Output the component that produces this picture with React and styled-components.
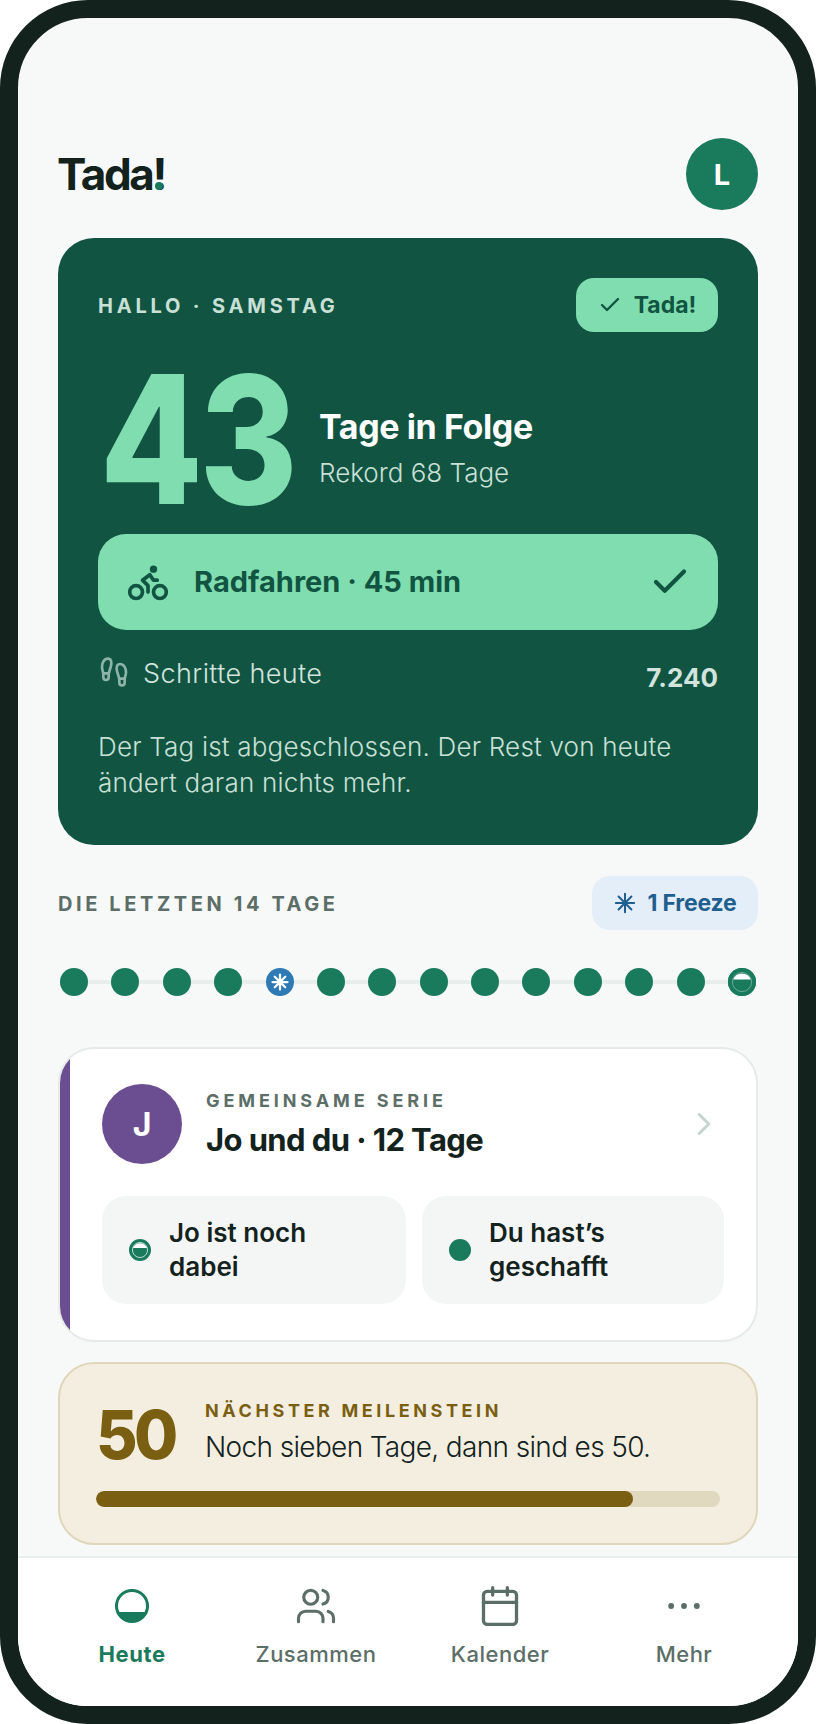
import React from "react";
import styled, { createGlobalStyle } from "styled-components";
import { Bike, Check, Footprints, ChevronRight, Users, Calendar, Ellipsis } from "lucide-react";

const Global = createGlobalStyle`
  html, body { margin: 0; padding: 0; background: #fff; }
  * { box-sizing: border-box; }
  body { font-family: Inter, "Noto Sans", sans-serif; }
`;

const Phone = styled.div`
  width: 816px; height: 1724px; border: 18px solid #13221d; border-radius: 88px;
  overflow: hidden; display: flex; flex-direction: column; background: #f7f9f8;
`;
const Screen = styled.main`
  flex: 1; min-height: 0; overflow: hidden; padding: 120px 40px 0;
  display: flex; flex-direction: column;
`;
const Header = styled.header`
  display: flex; justify-content: space-between; align-items: center; height: 72px; margin-bottom: 28px;
`;
const Logo = styled.h1`
  margin: 0 0 0 -1px; font-size: 44px; font-weight: 700; letter-spacing: -2.4px; color: #13221d;
`;
const LogoMark = styled.span`
  position: relative;
  &::after {
    content: ""; position: absolute; left: 3px; bottom: 11px; width: 8px; height: 8px;
    border-radius: 50%; background: #1a7a5c;
  }
`;
const Avatar = styled.div`
  width: ${p => p.$size}px; height: ${p => p.$size}px; border-radius: 50%; background: ${p => p.$bg};
  color: #fff; font-weight: 700; font-size: ${p => p.$font}px; flex: none;
  display: flex; align-items: center; justify-content: center;
`;
const Hero = styled.section`
  background: #115442; border-radius: 36px; padding: 40px; height: 607px; color: #fff;
  display: flex; flex-direction: column; margin-bottom: 31px;
`;
const HeroTop = styled.div`
  display: flex; justify-content: space-between; align-items: center; height: 54px;
`;
const Eyebrow = styled.div`
  font-size: ${p => p.$size || 20}px; font-weight: 700; letter-spacing: ${p => p.$track || 3.6}px;
  color: ${p => p.$color}; white-space: nowrap; padding-top: ${p => p.$nudge || 0}px;
`;
const DoneBadge = styled.div`
  width: 142px; height: 54px; border-radius: 18px; background: #80ddb0; color: #115442;
  display: flex; align-items: center; justify-content: center; gap: 12px;
  font-size: 23px; font-weight: 700;
`;
const StreakRow = styled.div`
  display: flex; align-items: center; height: 178px; margin-top: 19px; margin-bottom: 5px;
`;
const StreakNumber = styled.div`
  font-size: 178px; font-weight: 800; line-height: 178px; letter-spacing: -4px; color: #80ddb0;
  width: 219px; flex: none; margin-left: 2px; transform: scaleX(0.84); transform-origin: left center;
`;
const StreakText = styled.div`
  display: flex; flex-direction: column; gap: 9px; padding-top: 17px;
`;
const StreakTitle = styled.div`
  font-size: 34px; line-height: 40px; font-weight: 700; letter-spacing: -0.4px; color: #fff;
`;
const StreakSub = styled.div`
  font-size: 26px; line-height: 34px; font-weight: 300; color: #c8e0d6;
`;
const Activity = styled.div`
  height: 96px; border-radius: 28px; background: #80ddb0; color: #115442;
  display: flex; align-items: center; padding: 0 27px 0 28px; gap: 24px;
  font-size: 29px; font-weight: 700;
  span { flex: 1; margin-top: -2px; }
`;
const Steps = styled.div`
  display: flex; justify-content: space-between; align-items: center; margin-top: 22px; height: 50px;
  color: #d2e4dd;
`;
const StepsLabel = styled.div`
  display: flex; align-items: center; gap: 13px; font-size: 27px; font-weight: 300; letter-spacing: 0.4px;
  margin-top: -8px;
  svg { color: #8db5a7; margin-top: -2px; }
`;
const StepsValue = styled.div`
  font-size: 26px; font-weight: 700; margin-top: 0;
`;
const HeroNote = styled.p`
  margin: 27px 0 0; font-size: 26px; line-height: 36px; font-weight: 300; letter-spacing: 0.2px; color: #c8e0d6;
`;
const SectionHead = styled.div`
  display: flex; justify-content: space-between; align-items: center; height: 54px; margin-bottom: 38px;
`;
const FreezeChip = styled.div`
  width: 166px; height: 54px; border-radius: 18px; background: #e4eef8; color: #1f5f8f;
  display: flex; align-items: center; justify-content: center; gap: 12px;
  font-size: 23px; font-weight: 700; letter-spacing: -0.2px;
`;
const Track = styled.div`
  position: relative; display: flex; justify-content: space-between; padding: 0 2px; height: 28px; margin-bottom: 51px;
  flex: none;
  &::before {
    content: ""; position: absolute; left: 2px; right: 2px; top: 12px; height: 4px; background: #e8eeec;
  }
`;
const Dot = styled.div`
  position: relative; width: ${p => p.$size || 28}px; height: ${p => p.$size || 28}px; flex: none;
  border-radius: 50%; background: ${p => p.$bg || "#1a7a5c"};
  display: flex; align-items: center; justify-content: center;
`;
const SharedCard = styled.section`
  position: relative; height: 295px; background: #fff; border: 2px solid #e6ebe9; border-radius: 36px;
  padding: 35px 30px 0 42px; overflow: hidden; margin-bottom: 20px; flex: none;
  &::before { content: ""; position: absolute; left: 0; top: 0; bottom: 0; width: 10px; background: #6b4e91; }
`;
const SharedHead = styled.div`
  display: flex; align-items: center; gap: 24px; height: 80px; margin-bottom: 32px;
  svg { color: #c8d4cf; margin-left: auto; margin-right: 3px; }
`;
const SharedText = styled.div`
  display: flex; flex-direction: column; gap: 10px;
`;
const SharedTitle = styled.div`
  font-size: 31px; line-height: 38px; font-weight: 700; letter-spacing: -0.6px; color: #13221d;
`;
const PersonRow = styled.div`
  display: grid; grid-template-columns: 304px 302px; gap: 16px;
`;
const Person = styled.div`
  height: 108px; border-radius: 24px; background: #f4f6f5; display: flex; align-items: center;
  gap: 18px; padding: 0 24px 0 27px; font-size: 26px; line-height: 34px; font-weight: 600; color: #13221d;
`;
const Milestone = styled.section`
  height: 183px; background: #f4eee0; border: 2px solid #e0d6bb; border-radius: 36px; flex: none;
  padding: 32px 36px 0; display: flex; flex-direction: column;
`;
const MilestoneTop = styled.div`
  display: flex; align-items: center; height: 76px; margin-bottom: 19px;
`;
const MilestoneNumber = styled.div`
  font-size: 68px; font-weight: 800; letter-spacing: -4px; color: #7a5f12; line-height: 76px;
  width: 109px; flex: none; transform: scaleX(0.94); transform-origin: left center;
`;
const MilestoneText = styled.div`
  display: flex; flex-direction: column; color: #13221d; font-size: 28px; line-height: 36px; font-weight: 300;
  letter-spacing: -0.65px; margin-top: -10px;
`;
const Progress = styled.div`
  height: 16px; border-radius: 8px; background: #e0d8bf; overflow: hidden;
`;
const ProgressFill = styled.div`
  height: 100%; border-radius: 8px; background: #7a5f12;
`;
const Nav = styled.nav`
  flex: none; height: 150px; background: #fff; border-top: 2px solid #e8eeec;
  display: grid; grid-template-columns: repeat(4, 184px); padding: 24px 22px 0;
`;
const NavItem = styled.div`
  display: flex; flex-direction: column; align-items: center; gap: 10px;
  color: ${p => (p.$active ? "#1a7a5c" : "#5c6e68")};
  font-size: 22px; line-height: 28px; font-weight: ${p => (p.$active ? 700 : 500)};
  letter-spacing: ${p => (p.$active ? 0.6 : 0.5)}px;
`;
const NavIcon = styled.div`
  height: 48px; width: 48px; display: flex; align-items: center; justify-content: center;
`;

const Spark = ({ size, color, width = 2 }) => (
  <svg width={size} height={size} viewBox="0 0 24 24" fill="none" stroke={color} strokeWidth={width} strokeLinecap="round">
    <path d="M12 2v20M2 12h20M5 5l14 14M19 5L5 19" />
  </svg>
);

const HalfDot = ({ size, ring = 0.35 }) => (
  <svg width={size} height={size} viewBox="0 0 28 28">
    <circle cx="14" cy="14" r="14" fill="#1a7a5c" />
    <path d="M5.1 11.5a9.6 9.6 0 0 1 17.8 0z" fill="#fff" />
    <circle cx="14" cy="14" r="9.6" fill="none" stroke="#fff" strokeOpacity={ring} strokeWidth="1" />
  </svg>
);

const TodayIcon = () => (
  <svg width="36" height="36" viewBox="0 0 36 36">
    <circle cx="18" cy="18" r="15.5" fill="#fff" stroke="#1a7a5c" strokeWidth="3" />
    <path d="M3.7 24h28.6a15.5 15.5 0 0 1-28.6 0z" fill="#1a7a5c" />
  </svg>
);

const days = Array.from({ length: 12 });

export default function App() {
  return (
    <Phone>
      <Global />
      <Screen>
        <Header>
          <Logo>Tada<LogoMark>!</LogoMark></Logo>
          <Avatar $size={72} $bg="#1a7a5c" $font={29}>L</Avatar>
        </Header>
        <Hero>
          <HeroTop>
            <Eyebrow $color="#c8e0d6" $nudge={1} $track={3.8}>HALLO · SAMSTAG</Eyebrow>
            <DoneBadge><Check size={24} strokeWidth={2.4} />Tada!</DoneBadge>
          </HeroTop>
          <StreakRow>
            <StreakNumber>43</StreakNumber>
            <StreakText>
              <StreakTitle>Tage in Folge</StreakTitle>
              <StreakSub>Rekord 68 Tage</StreakSub>
            </StreakText>
          </StreakRow>
          <Activity>
            <Bike size={44} strokeWidth={2} />
            <span>Radfahren · 45 min</span>
            <Check size={42} strokeWidth={2.4} />
          </Activity>
          <Steps>
            <StepsLabel><Footprints size={32} strokeWidth={2} />Schritte heute</StepsLabel>
            <StepsValue>7.240</StepsValue>
          </Steps>
          <HeroNote>Der Tag ist abgeschlossen. Der Rest von heute ändert daran nichts mehr.</HeroNote>
        </Hero>
        <SectionHead>
          <Eyebrow $color="#5c6e68" $nudge={2}>DIE LETZTEN 14 TAGE</Eyebrow>
          <FreezeChip><Spark size={22} color="#1f5f8f" width={2.2} />1 Freeze</FreezeChip>
        </SectionHead>
        <Track>
          {days.slice(0, 4).map((_, i) => <Dot key={i} />)}
          <Dot $bg="#2e7ab5"><Spark size={18} color="#fff" width={3} /></Dot>
          {days.slice(0, 8).map((_, i) => <Dot key={i} />)}
          <Dot><HalfDot size={28} /></Dot>
        </Track>
        <SharedCard>
          <SharedHead>
            <Avatar $size={80} $bg="#6b4e91" $font={32}>J</Avatar>
            <SharedText>
              <Eyebrow $color="#5c6e68" $size={18} $track={3.9}>GEMEINSAME SERIE</Eyebrow>
              <SharedTitle>Jo und du · 12 Tage</SharedTitle>
            </SharedText>
            <ChevronRight size={38} strokeWidth={2} />
          </SharedHead>
          <PersonRow>
            <Person><HalfDot size={22} ring={0.9} />Jo ist noch<br />dabei</Person>
            <Person><Dot $size={22} />Du hast’s<br />geschafft</Person>
          </PersonRow>
        </SharedCard>
        <Milestone>
          <MilestoneTop>
            <MilestoneNumber>50</MilestoneNumber>
            <MilestoneText>
              <Eyebrow $color="#7a5f12" $size={18} $track={3.6}>NÄCHSTER MEILENSTEIN</Eyebrow>
              Noch sieben Tage, dann sind es 50.
            </MilestoneText>
          </MilestoneTop>
          <Progress><ProgressFill style={{ width: `${(43 / 50) * 100}%` }} /></Progress>
        </Milestone>
      </Screen>
      <Nav>
        <NavItem $active><NavIcon><TodayIcon /></NavIcon>Heute</NavItem>
        <NavItem><NavIcon><Users size={42} strokeWidth={1.8} /></NavIcon>Zusammen</NavItem>
        <NavItem><NavIcon><Calendar size={44} strokeWidth={1.8} /></NavIcon>Kalender</NavItem>
        <NavItem><NavIcon><Ellipsis size={44} strokeWidth={1.2} fill="currentColor" /></NavIcon>Mehr</NavItem>
      </Nav>
    </Phone>
  );
}
